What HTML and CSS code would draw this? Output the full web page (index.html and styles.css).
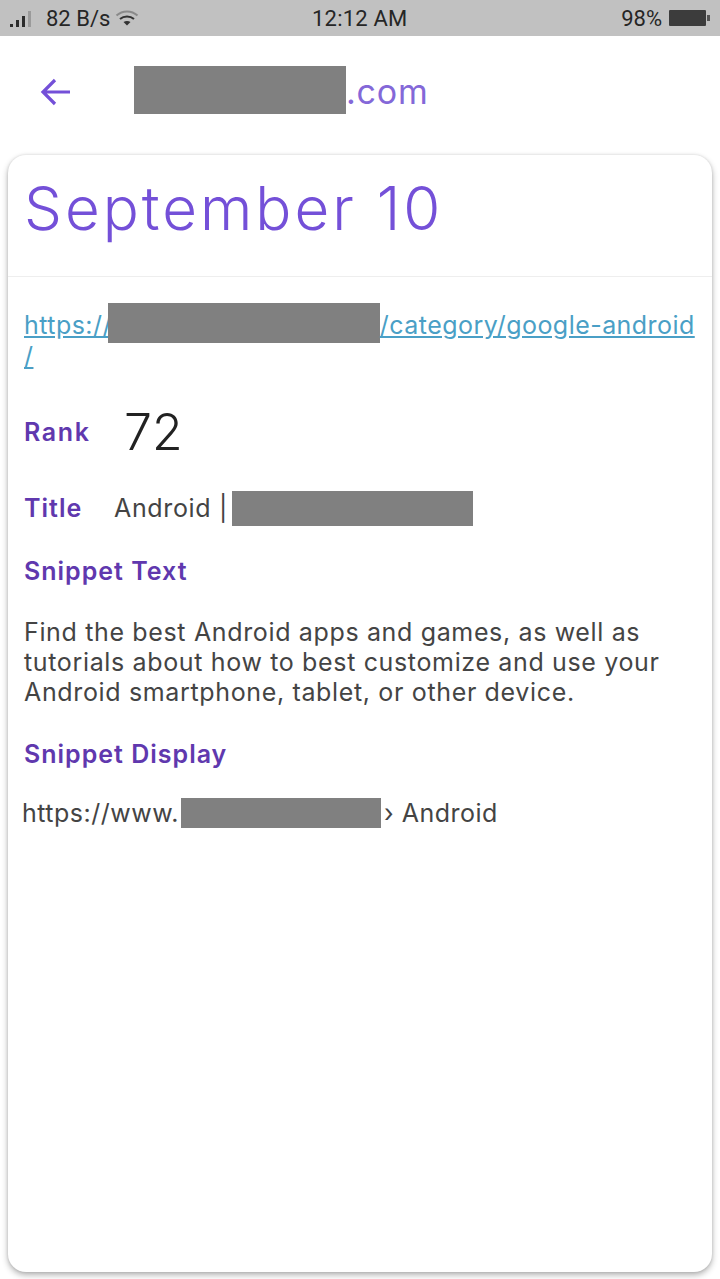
FILE: index.html
```html
<!DOCTYPE html>
<html lang="en">
<head>
<meta charset="utf-8">
<title>September 10</title>
<link rel="stylesheet" href="styles.css">
</head>
<body>
<div class="status">
  <div class="status-left">
    <svg class="signal" viewBox="0 0 26 18" width="26" height="18"><rect x="0" y="14" width="3" height="3" fill="#2b2b2b"/><rect x="6" y="10" width="3" height="7" fill="#2b2b2b"/><rect x="12" y="6" width="3" height="11" fill="#2b2b2b"/><rect x="18" y="1" width="3" height="16" fill="#9a9a9a"/></svg>
    <span class="net">82 B/s</span>
    <svg class="wifi" viewBox="0 0 24 18" width="24" height="18"><path d="M1.500 6.500C7.500 1 16.500 1 22.500 6.500" fill="none" stroke="#8a8a8a" stroke-width="2"/><path d="M5 10C9 6.500 15 6.500 19 10" fill="none" stroke="#333" stroke-width="2"/><path d="M8.500 13C10.500 11.500 13.500 11.500 15.500 13L12 16.500Z" fill="#333"/></svg>
  </div>
  <span class="clock">12:12 AM</span>
  <div class="status-right">
    <span class="pct">98%</span>
    <svg class="batt" viewBox="0 0 42 18" width="42" height="18"><rect x="0" y="1" width="37" height="16" fill="#3c3c3c" rx="1"/><rect x="38" y="6" width="3" height="6" fill="#555"/></svg>
  </div>
</div>
<header class="bar">
  <svg class="back" viewBox="0 0 36 36" width="36" height="36"><path d="M32 18H6M17 6 5 18l12 12" fill="none" stroke="#7450d8" stroke-width="3.200"/></svg>
  <div class="domain"><span class="redact r-head"></span><span class="tld">.com</span></div>
</header>
<main class="card">
  <h1 class="date">September 10</h1>
  <section class="body">
    <a class="link" href="#">https://<span class="redact r-link"></span>/category/google-android<br>/</a>
    <div class="row rank-row"><span class="label rank-label">Rank</span><span class="rank">72</span></div>
    <div class="row title-row"><span class="label title-label">Title</span><span class="text">Android |</span><span class="redact r-title"></span></div>
    <div class="label snip-label">Snippet Text</div>
    <p class="para">Find the best Android apps and games, as well as tutorials about how to best customize and use your Android smartphone, tablet, or other device.</p>
    <div class="label disp-label">Snippet Display</div>
    <div class="row disp"><span>https://www.</span><span class="redact r-disp"></span><span>› Android</span></div>
  </section>
</main>
</body>
</html>
```
FILE: styles.css
```css
* { box-sizing: border-box; }
html, body { margin: 0; padding: 0; }
body { width: 720px; height: 1279px; background: #fff; font-family: "Inter", "Liberation Sans", sans-serif; overflow: hidden; display: flex; flex-direction: column; }
.status { height: 36px; background: #c1c1c1; display: flex; align-items: center; justify-content: space-between; padding: 0 9px 0 10px; color: #262626; font-size: 22px; font-family: "Roboto", sans-serif; position: relative; flex: none; }
.status-left, .status-right { display: flex; align-items: center; }
.signal { margin-right: 10px; margin-top: 1px; }
.net { margin-right: 5px; }
.clock { position: absolute; left: 312px; top: 6px; letter-spacing: .2px; }
.pct { margin-right: 7px; }
.bar { height: 119px; display: flex; align-items: center; padding: 0 0 8px 38px; flex: none; }
.back { flex: none; }
.domain { display: flex; align-items: center; margin-left: 60px; }
.redact { display: inline-block; background: #808080; }
.r-head { width: 212px; height: 48px; margin-bottom: 4px; }
.tld { color: #8468d8; font-size: 34px; margin-left: 0; letter-spacing: .8px; }
.card { margin: 0 8px; height: 1117px; border-radius: 18px; background: #fff; box-shadow: 0 3px 6px rgba(0,0,0,.3), 0 0 3px rgba(0,0,0,.12); flex: none; }
.date { margin: 0; height: 122px; padding: 17px 0 0 16px; font-size: 60px; font-weight: 300; color: #7450d8; line-height: 72px; border-bottom: 1px solid #eee; letter-spacing: 3px; }
.body { padding: 26px 16px 0; }
.link { display: block; width: 680px; color: #4a9fc6; font-size: 25px; line-height: 27px; text-decoration: underline; letter-spacing: .45px; }
.r-link { width: 272px; height: 40px; vertical-align: -9px; margin-left: -4px; }
.row { display: flex; align-items: center; }
.label { color: #6038ae; font-size: 25px; font-weight: 600; letter-spacing: 1px; }
.rank-row { margin-top: 32px; height: 60px; }
.rank-label { width: 100px; letter-spacing: 1.6px; }
.rank { font-size: 50px; font-weight: 300; color: #222; }
.title-row { margin-top: 28px; height: 36px; }
.title-label { width: 90px; }
.text { font-size: 25px; color: #444; margin-right: 5px; letter-spacing: .65px; }
.r-title { width: 241px; height: 35px; margin-left: -1px; }
.snip-label { margin-top: 27px; line-height: 36px; }
.para { margin: 28px 0 0; font-size: 25px; line-height: 30px; color: #444; width: 670px; letter-spacing: .65px; }
.disp-label { margin-top: 29px; line-height: 36px; }
.disp { margin-top: 26px; font-size: 25px; color: #444; margin-left: -2px; letter-spacing: .5px; }
.r-disp { width: 200px; height: 30px; margin: 0 3px 0 2px; }
```
